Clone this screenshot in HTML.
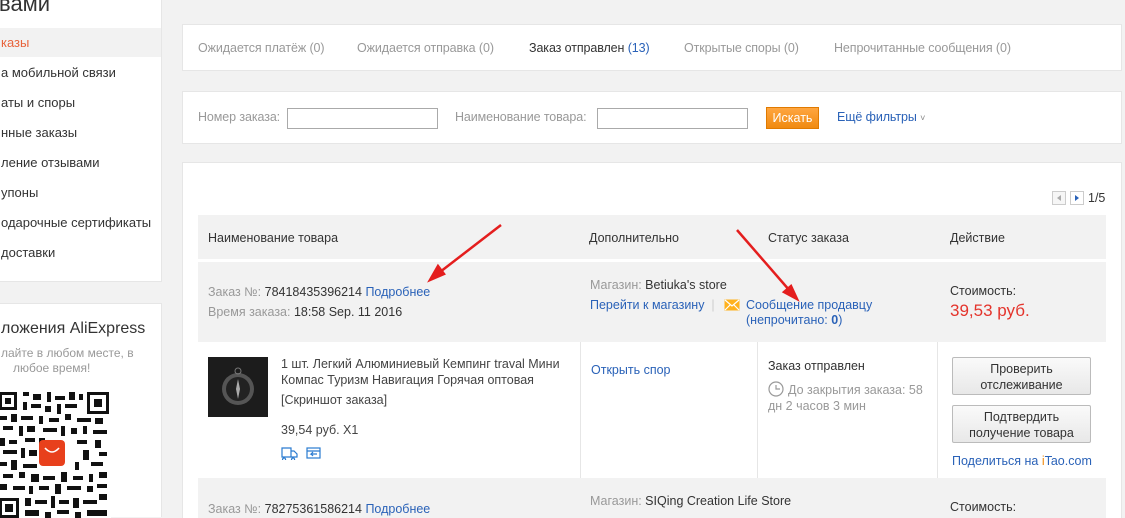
<!DOCTYPE html>
<html style="width:1125px;height:518px;overflow:hidden"><head><meta charset="utf-8"><style>
*{margin:0;padding:0;box-sizing:border-box}
body{width:1125px;height:518px;overflow:hidden;background:#f2f2f2;font-family:"Liberation Sans",sans-serif;font-size:12.5px;color:#333;position:relative}
.a{position:absolute;white-space:nowrap}
.w{position:absolute;background:#fff;border:1px solid #e6e6e6}
.g{color:#999}.b{color:#2a62b8}
.n{font-size:12.5px;letter-spacing:-0.1px}
.btn{position:absolute;background:linear-gradient(#fafafa,#e8e8e8);border:1px solid #bbb;border-radius:2px;text-align:center;font-size:12.5px;line-height:16px;padding-top:3px;color:#333}
</style></head><body>
<div class="w" style="left:-2px;top:-2px;width:164px;height:284px">
<div class="a" style="left:0;top:-8px;font-size:22px;color:#333">вами</div>
<div style="position:absolute;left:0;top:29px;width:162px;height:29px;background:#f2f2f2"></div>
<div class="a" style="left:2px;top:36px;font-size:13px;color:#e8643c">казы</div>
<div class="a" style="left:2px;top:66px;font-size:13px">а мобильной связи</div>
<div class="a" style="left:2px;top:96px;font-size:13px">аты и споры</div>
<div class="a" style="left:2px;top:126px;font-size:13px">нные заказы</div>
<div class="a" style="left:2px;top:156px;font-size:13px">ление отзывами</div>
<div class="a" style="left:2px;top:186px;font-size:13px">упоны</div>
<div class="a" style="left:2px;top:216px;font-size:13px">одарочные сертификаты</div>
<div class="a" style="left:2px;top:246px;font-size:13px">доставки</div>
</div>
<div class="w" style="left:-2px;top:303px;width:164px;height:214px;border-bottom:none">
<div class="a" style="left:2px;top:16px;font-size:16px">ложения AliExpress</div>
<div class="a" style="left:2px;top:42px;font-size:12px;color:#999">лайте в любом месте, в</div>
<div class="a" style="left:14px;top:57px;font-size:12px;color:#999">любое время!</div>
<svg class="a" style="left:0;top:86px" width="112" height="130" viewBox="0 0 112 130">
<rect x="0" y="0" width="112" height="130" fill="#fff"/>
<g fill="#111">
<rect x="0" y="2" width="18" height="18"/><rect x="88" y="2" width="22" height="22"/><rect x="0" y="108" width="20" height="20"/>
<path d="M24 2h6v4h-6zM34 4h8v6h-8zM48 2h4v10h-4zM56 6h10v4h-10zM70 2h6v8h-6zM80 4h4v6h-4zM24 12h4v8h-4zM32 14h10v4h-10zM46 16h6v6h-6zM58 14h4v10h-4zM66 14h12v4h-12zM0 26h8v4h-8zM12 24h6v8h-6zM22 26h12v4h-12zM40 26h4v8h-4zM50 28h10v4h-10zM66 24h6v6h-6zM78 28h14v4h-14zM96 28h8v6h-8zM4 36h10v4h-10zM20 36h4v10h-4zM28 36h8v6h-8zM44 38h14v4h-14zM62 36h4v10h-4zM72 38h6v6h-6zM84 36h4v8h-4zM94 40h14v4h-14zM0 48h6v8h-6zM10 50h8v4h-8zM26 48h10v4h-10zM40 48h6v10h-6zM78 50h10v4h-10zM96 50h6v8h-6zM4 60h14v4h-14zM22 58h4v10h-4zM30 60h8v6h-8zM84 60h6v10h-6zM100 62h8v4h-8zM0 72h8v4h-8zM12 70h6v10h-6zM24 74h14v4h-14zM76 72h4v8h-4zM92 72h12v4h-12zM4 84h10v4h-10zM20 82h6v6h-6zM32 84h8v8h-8zM44 86h12v4h-12zM62 82h6v10h-6zM74 86h10v4h-10zM90 84h4v8h-4zM100 82h8v6h-8zM0 94h8v6h-8zM14 96h12v4h-12zM30 96h4v8h-4zM40 96h10v4h-10zM56 94h6v10h-6zM68 96h14v4h-14zM88 96h6v6h-6zM98 94h10v4h-10zM26 108h6v8h-6zM36 110h12v4h-12zM52 106h4v12h-4zM60 110h10v4h-10zM74 108h6v10h-6zM84 110h14v4h-14zM100 104h8v6h-8zM26 120h14v6h-14zM46 122h6v6h-6zM58 120h12v4h-12zM76 122h6v6h-6zM88 120h20v6h-20z"/>
</g>
<g fill="#fff"><rect x="3" y="5" width="12" height="12"/><rect x="91" y="5" width="16" height="16"/><rect x="3" y="111" width="14" height="14"/></g>
<g fill="#111"><rect x="6" y="8" width="6" height="6"/><rect x="95" y="9" width="8" height="8"/><rect x="6" y="114" width="8" height="8"/></g>
<rect x="40" y="50" width="26" height="26" rx="4" fill="#e8401c"/>
<path d="M46 58q7 8 14 0" stroke="#fff" stroke-width="1.6" fill="none"/>
</svg>
</div>

<div class="w" style="left:182px;top:24px;width:940px;height:47px">
<div class="a n g" style="left:15px;top:16px">Ожидается платёж (0)</div>
<div class="a n g" style="left:174px;top:16px">Ожидается отправка (0)</div>
<div class="a n" style="left:346px;top:16px">Заказ отправлен <span class="b">(13)</span></div>
<div class="a n g" style="left:501px;top:16px">Открытые споры (0)</div>
<div class="a n g" style="left:651px;top:16px">Непрочитанные сообщения (0)</div>
</div>
<div class="w" style="left:182px;top:91px;width:940px;height:53px">
<div class="a n g" style="left:15px;top:18px">Номер заказа:</div>
<div style="position:absolute;left:104px;top:16px;width:151px;height:21px;border:1px solid #aaa"></div>
<div class="a n g" style="left:272px;top:18px">Наименование товара:</div>
<div style="position:absolute;left:414px;top:16px;width:151px;height:21px;border:1px solid #aaa"></div>
<div style="position:absolute;left:583px;top:15px;width:53px;height:22px;background:linear-gradient(#ffa640,#f08a10);border:1px solid #e07a00;color:#fff;text-align:center;line-height:20px;font-size:12.5px">Искать</div>
<div class="a n b" style="left:654px;top:18px">Ещё фильтры <span style="color:#888;font-size:9px">˅</span></div>
</div>

<div class="w" style="left:182px;top:162px;width:940px;height:356px;border-bottom:none">
<div style="position:absolute;left:869px;top:28px;width:14px;height:14px;border:1px solid #ccc;background:#f6f6f6"></div>
<div style="position:absolute;left:874px;top:32px;width:0;height:0;border:3px solid transparent;border-right:4px solid #aaa;border-left:0"></div>
<div style="position:absolute;left:887px;top:28px;width:14px;height:14px;border:1px solid #ccc;background:#fff"></div>
<div style="position:absolute;left:892px;top:32px;width:0;height:0;border:3px solid transparent;border-left:4px solid #2a62b8;border-right:0"></div>
<div class="a" style="left:905px;top:28px;font-size:12.5px">1/5</div>
</div>
<div style="position:absolute;left:198px;top:215px;width:908px;height:44px;background:#f2f2f2"></div>
<div class="a" style="left:208px;top:231px">Наименование товара</div>
<div class="a" style="left:589px;top:231px">Дополнительно</div>
<div class="a" style="left:768px;top:231px">Статус заказа</div>
<div class="a" style="left:950px;top:231px">Действие</div>

<div style="position:absolute;left:198px;top:262px;width:908px;height:80px;background:#f2f2f2"></div>
<div class="a" style="left:208px;top:285px"><span class="g">Заказ №:</span> 78418435396214 <span class="b">Подробнее</span></div>
<div class="a" style="left:208px;top:305px"><span class="g">Время заказа:</span> 18:58 Sep. 11 2016</div>
<div class="a" style="left:590px;top:278px"><span class="g">Магазин:</span> Betiuka's store</div>
<div class="a" style="left:590px;top:298px"><span class="b">Перейти к магазину</span> <span style="color:#ccc">&nbsp;|&nbsp;</span></div>
<svg class="a" style="left:724px;top:299px" width="16" height="12"><rect x="0.5" y="0.5" width="15" height="11" fill="#ffb21e"/><path d="M1 1l7 6 7-6M1 11l5-5M15 11l-5-5" stroke="#fff" stroke-width="1.2" fill="none"/></svg>
<div class="a b" style="left:746px;top:298px">Сообщение продавцу</div>
<div class="a b" style="left:746px;top:313px">(непрочитано: <b>0</b>)</div>
<div class="a" style="left:950px;top:284px">Стоимость:</div>
<div class="a" style="left:950px;top:301px;font-size:17px;color:#e4342c">39,53 руб.</div>

<div style="position:absolute;left:580px;top:342px;width:1px;height:136px;background:#e6e6e6"></div>
<div style="position:absolute;left:757px;top:342px;width:1px;height:136px;background:#e6e6e6"></div>
<div style="position:absolute;left:937px;top:342px;width:1px;height:136px;background:#e6e6e6"></div>
<svg class="a" style="left:208px;top:357px" width="60" height="60"><rect width="60" height="60" fill="#1c1c1c"/><circle cx="30" cy="32" r="16" fill="#555"/><circle cx="30" cy="32" r="12" fill="#222"/><circle cx="30" cy="14" r="3" fill="none" stroke="#777"/><path d="M30 22l2 10-2 10-2-10z" fill="#aaa"/></svg>
<div class="a" style="left:281px;top:356px;font-size:12.5px;color:#444;line-height:16px">1 шт. Легкий Алюминиевый Кемпинг traval Мини<br>Компас Туризм Навигация Горячая оптовая</div>
<div class="a" style="left:281px;top:393px;color:#444">[Скриншот заказа]</div>
<div class="a" style="left:281px;top:423px;color:#444">39,54 руб. X1</div>
<svg class="a" style="left:281px;top:446px" width="42" height="14"><g fill="none" stroke="#2a7bd0" stroke-width="1.2"><path d="M1 2h9v9H1zM10 5h3l3 3v3h-6M3 12a1.5 1.5 0 1 0 0.1 0M12 12a1.5 1.5 0 1 0 0.1 0"/><rect x="26" y="2" width="13" height="10"/><path d="M26 5h13M36 8h-6l2-2M30 8l2 2"/></g></svg>
<div class="a b" style="left:591px;top:363px">Открыть спор</div>
<div class="a" style="left:768px;top:359px">Заказ отправлен</div>
<svg class="a" style="left:768px;top:381px" width="16" height="16"><circle cx="8" cy="8" r="7" fill="none" stroke="#999" stroke-width="1.2"/><path d="M8 4v4h4" stroke="#999" fill="none" stroke-width="1.2"/></svg>
<div class="a" style="left:788px;top:383px;color:#999;font-size:12.5px">До закрытия заказа: 58</div>
<div class="a" style="left:768px;top:399px;color:#999;font-size:12.5px">дн 2 часов 3 мин</div>
<div class="btn" style="left:952px;top:357px;width:139px;height:38px">Проверить<br>отслеживание</div>
<div class="btn" style="left:952px;top:405px;width:139px;height:38px">Подтвердить<br>получение товара</div>
<div class="a b" style="left:952px;top:454px">Поделиться на <span style="color:#f08a10">i</span>Tao.com</div>

<div style="position:absolute;left:198px;top:478px;width:908px;height:40px;background:#f2f2f2"></div>
<div class="a" style="left:208px;top:502px"><span class="g">Заказ №:</span> 78275361586214 <span class="b">Подробнее</span></div>
<div class="a" style="left:590px;top:494px"><span class="g">Магазин:</span> SIQing Creation Life Store</div>
<div class="a" style="left:950px;top:500px">Стоимость:</div>

<svg class="a" style="left:0;top:0" width="1125" height="518"><g stroke="#e41e1e" stroke-width="2.5" fill="#e41e1e">
<path d="M501 225L440 272" fill="none"/><path d="M430 280l8-14 6 8z"/>
<path d="M737 230L790 291" fill="none"/><path d="M797 299l-13-7 7-6z"/></g></svg>
</body></html>
